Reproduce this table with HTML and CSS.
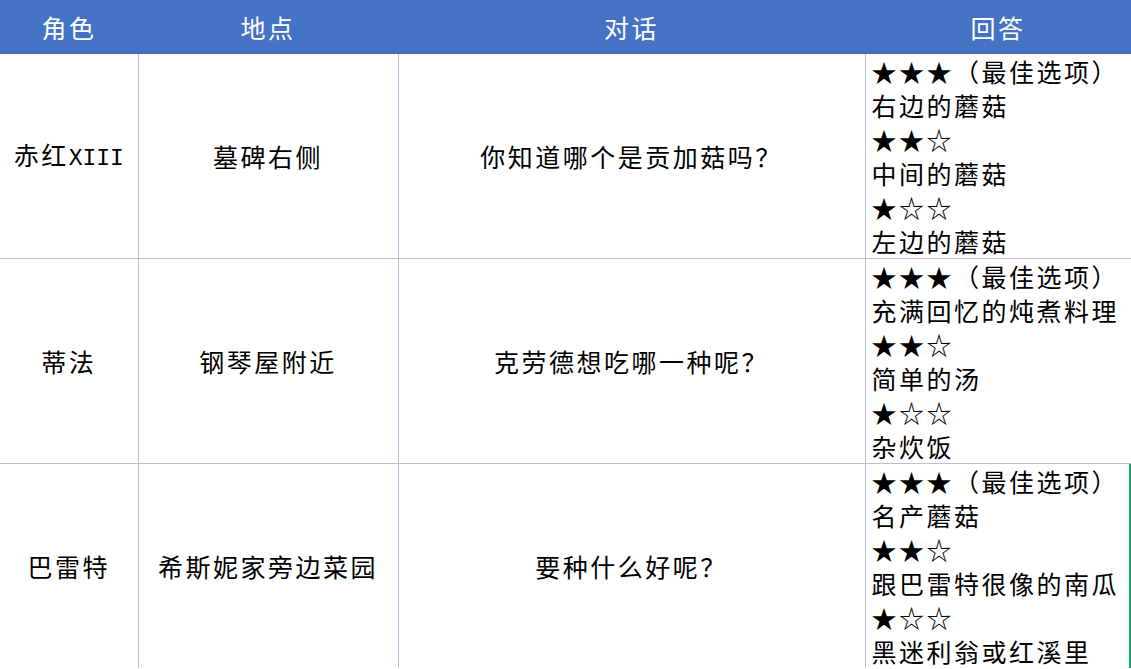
FILE: index.html
```html
<!DOCTYPE html>
<html lang="zh">
<head>
<meta charset="utf-8">
<link rel="stylesheet" href="styles.css">
</head>
<body>
<table class="grid">
  <colgroup>
    <col class="c1"><col class="c2"><col class="c3"><col class="c4">
  </colgroup>
  <thead>
    <tr class="head">
      <th>角色</th><th>地点</th><th>对话</th><th>回答</th>
    </tr>
  </thead>
  <tbody>
    <tr class="row">
      <td class="mid">赤红<span class="latin">XIII</span></td>
      <td class="mid">墓碑右侧</td>
      <td class="mid">你知道哪个是贡加菇吗？</td>
      <td class="ans">
        <div>★★★（最佳选项）</div>
        <div>右边的蘑菇</div>
        <div>★★☆</div>
        <div>中间的蘑菇</div>
        <div>★☆☆</div>
        <div>左边的蘑菇</div>
      </td>
    </tr>
    <tr class="row">
      <td class="mid">蒂法</td>
      <td class="mid">钢琴屋附近</td>
      <td class="mid">克劳德想吃哪一种呢？</td>
      <td class="ans">
        <div>★★★（最佳选项）</div>
        <div>充满回忆的炖煮料理</div>
        <div>★★☆</div>
        <div>简单的汤</div>
        <div>★☆☆</div>
        <div>杂炊饭</div>
      </td>
    </tr>
    <tr class="row">
      <td class="mid">巴雷特</td>
      <td class="mid">希斯妮家旁边菜园</td>
      <td class="mid">要种什么好呢？</td>
      <td class="ans green">
        <div>★★★（最佳选项）</div>
        <div>名产蘑菇</div>
        <div>★★☆</div>
        <div>跟巴雷特很像的南瓜</div>
        <div>★☆☆</div>
        <div>黑迷利翁或红溪里</div>
      </td>
    </tr>
  </tbody>
</table>
</body>
</html>
```

FILE: styles.css
```css
html, body {
  margin: 0;
  padding: 0;
  background: #ffffff;
  overflow: hidden;
}

.grid {
  border-collapse: collapse;
  table-layout: fixed;
  width: 1131px;
  font-family: "Noto Sans CJK SC", "Noto Sans", sans-serif;
  font-size: 25px;
  letter-spacing: 2.5px;
  color: #000000;
}

.c1 { width: 138px; }
.c2 { width: 260px; }
.c3 { width: 467px; }
.c4 { width: 266px; }

.head th {
  height: 53px;
  padding: 0;
  background: #4472c4;
  border-bottom: 1px solid #3f67b8;
  color: #ffffff;
  font-weight: normal;
  text-align: center;
  vertical-align: middle;
  line-height: 34px;
}

.row td {
  height: 204px;
  padding: 0;
  border-top: 1px solid #b8bedc;
  border-left: 1px solid #b8bedc;
  line-height: 34px;
}

.row td:first-child {
  border-left: none;
}

.row:first-child td {
  border-top: none;
}

.mid {
  text-align: center;
  vertical-align: middle;
}

.ans {
  text-align: left;
  vertical-align: top;
  padding-left: 6px !important;
  white-space: nowrap;
  overflow: hidden;
}

.ans div {
  height: 34px;
}

.ans.green {
  box-shadow: inset -2px 0 0 #1aa36b;
}

.latin {
  font-family: "Liberation Mono", monospace;
  font-size: 23px;
  letter-spacing: 0;
}
```
